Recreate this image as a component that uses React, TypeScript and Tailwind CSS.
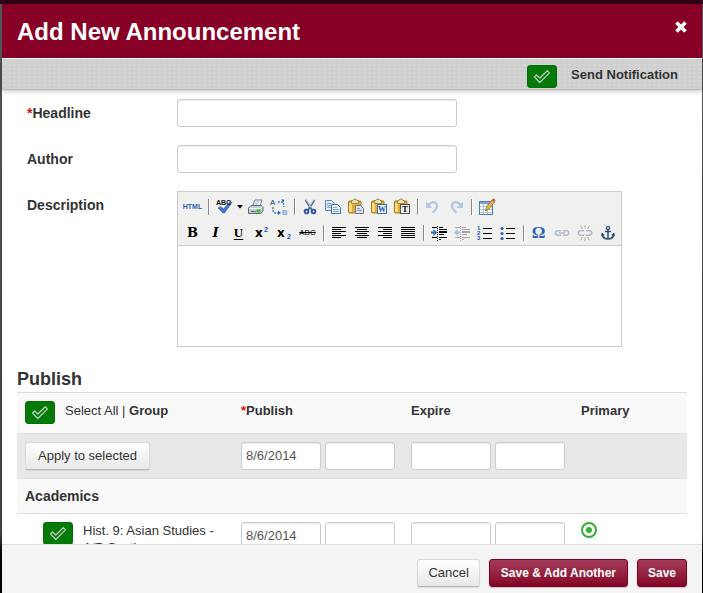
import type { ReactNode } from 'react';

interface ToolProps {
  label: string;
  children: ReactNode;
}

const Tool = ({ label, children }: ToolProps) => (
  <button
    type="button"
    aria-label={label}
    className="flex h-[26px] w-[23px] shrink-0 items-center justify-center pt-0.5"
  >
    {children}
  </button>
);

const Icon = ({ children }: { children: ReactNode }) => (
  <svg viewBox="0 0 18 18" className="h-[18px] w-[18px]" fill="none">
    {children}
  </svg>
);

const Separator = () => (
  <span className="flex w-2 shrink-0 items-center justify-end pt-0.5 pr-0.5">
    <span className="h-4 w-0.5 border-r border-white bg-[#8a8688]" />
  </span>
);

const Clipboard = ({ children }: { children: ReactNode }) => (
  <Icon>
    <rect x="1.5" y="3" width="12.500" height="12" rx="1" fill="#e3ad2f" stroke="#a07a22" />
    <path d="M3.500 5v9" stroke="#ffe48a" strokeWidth="2.500" />
    <path d="M4.500 2.500h1.500l1-1.500h2l1 1.500h1.500v3h-7z" fill="#eee3a8" stroke="#867a4c" strokeWidth=".8" />
    {children}
  </Icon>
);

const alignLines: { [k: string]: [number, number][] } = {
  left: [[2, 16], [2, 11], [2, 16], [2, 11], [2, 16], [2, 11]],
  center: [[2, 16], [4, 14], [2, 16], [4, 14], [2, 16], [4, 14]],
  right: [[2, 16], [7, 16], [2, 16], [7, 16], [2, 16], [7, 16]],
  justify: [[2, 16], [2, 16], [2, 16], [2, 16], [2, 16], [2, 16]],
};

const AlignIcon = ({ type }: { type: string }) => (
  <Icon>
    {alignLines[type].map(([from, to], i) => (
      <path key={i} d={`M${from} ${3.5 + i * 2}H${to}`} stroke="#000" />
    ))}
  </Icon>
);

const IndentIcon = ({ muted }: { muted?: boolean }) => {
  const color = muted ? '#a6a6a6' : '#000';
  return (
    <Icon>
      <path d="M2 3.500h5M9 3.500h4M9 5.500h8M9 10.500h5M2 13.500h5M9 13.500h8M9 15.500h2" stroke={color} />
      <path d="M9 8h8" stroke={color} strokeWidth="2" />
      <path d="M7.500 2v15" stroke={color} strokeDasharray="1 1" />
      <path
        d={muted ? 'M1 8.500l4-3.500v2.500h3v2H5V12z' : 'M7 8.500L3.500 5v2.500H1v2h2.500V12z'}
        fill={muted ? '#a9bfdf' : '#2f66c4'}
      />
    </Icon>
  );
};

const ListIcon = ({ numbered }: { numbered?: boolean }) => (
  <Icon>
    <path d="M7 4.500h9M7 9.500h9M7 14.500h9" stroke="#000" />
    {numbered ? (
      <g fill="#2458b8" fontFamily="Liberation Sans" fontWeight="bold" fontSize="6">
        <text x="1" y="6">1</text>
        <text x="1" y="11">2</text>
        <text x="1" y="16">3</text>
      </g>
    ) : (
      <g fill="#2f62b8">
        <circle cx="3" cy="4.500" r="1.600" />
        <circle cx="3" cy="9.500" r="1.600" />
        <circle cx="3" cy="14.500" r="1.600" />
      </g>
    )}
  </Icon>
);

const ArrowIcon = ({ redo }: { redo?: boolean }) => (
  <Icon>
    <g transform={redo ? 'translate(18 0) scale(-1 1)' : undefined}>
      <path d="M4 7.500C8 2.500 13 3.500 13 8c0 3-2 4.500-4.500 6.500" stroke="#b4c8e4" strokeWidth="2.300" />
      <path d="M2 3.500v6.500h6.500z" fill="#b3c8e6" />
    </g>
  </Icon>
);

const ChainIcon = ({ broken }: { broken?: boolean }) => (
  <Icon>
    <g stroke="#b3bac6" strokeWidth="1.600">
      <path d="M8 6.800H4.500a2.200 2.200 0 0 0 0 4.400H8M10 6.800h3.500a2.200 2.200 0 0 1 0 4.400H10" />
      {!broken && <path d="M6 9h6" />}
    </g>
    {broken && (
      <path
        d="M9 1v3.500M4.500 1.500l2 3.500M13.500 1.500l-2 3.500M9 17v-3.500M4.500 16.500l2-3.500M13.500 16.500l-2-3.500"
        stroke="#adadad"
      />
    )}
  </Icon>
);

const CheckToggle = ({ label }: { label: string }) => (
  <span className="grid h-[23px] w-[30px] shrink-0">
    <input
      type="checkbox"
      defaultChecked
      aria-label={label}
      className="col-start-1 row-start-1 h-full w-full appearance-none rounded bg-[#047a08] shadow-[inset_0_0_2px_#035005]"
    />
    <svg
      viewBox="0 0 30 23"
      className="pointer-events-none col-start-1 row-start-1 h-full w-full"
      fill="none"
    >
      <path
        d="M7.500 12l2-2 3.300 3 7.500-7.300 2.200 2.200-9.700 9.600z"
        stroke="#bfcfbf"
        strokeWidth="1.200"
        strokeLinejoin="round"
      />
    </svg>
  </span>
);

interface FieldProps {
  label: string;
  value?: string;
  className: string;
}

const Field = ({ label, value, className }: FieldProps) => (
  <input
    type="text"
    aria-label={label}
    defaultValue={value}
    className={`h-7 rounded-[3px] border border-[#ccc] bg-white px-1 pb-0.5 text-[13px] text-[#555] shadow-[inset_0_1px_1px_rgba(0,0,0,0.08)] ${className}`}
  />
);

const DateFields = ({ label, value }: { label: string; value?: string }) => (
  <div className="flex gap-1">
    <Field label={`${label} date`} value={value} className="w-20" />
    <Field label={`${label} time`} className="w-[70px]" />
  </div>
);

const EditorToolbar = () => (
  <div className="border-b border-[#ccc] bg-[#f0f0ee] pt-px pl-[3px]">
    <div className="flex">
      <Tool label="Edit HTML source">
        <span className="text-[7px] font-bold text-[#2b5fb4]">HTML</span>
      </Tool>
      <Separator />
      <Tool label="Check spelling">
        <Icon>
          <path d="M3 10l2.500-1.500 3 2.500L15 3.500l2 1L9.500 15H8z" fill="#3f74d1" stroke="#2c55a8" strokeWidth=".5" />
          <text x="1" y="7" fill="#111" fontFamily="Liberation Sans" fontWeight="bold" fontSize="7">ABC</text>
        </Icon>
      </Tool>
      <button type="button" aria-label="Spelling options" className="flex w-[9px] items-center justify-center pt-0.5">
        <svg viewBox="0 0 6 4" className="h-1 w-1.5">
          <path d="M0 0h6L3 3.500z" fill="#000" />
        </svg>
      </button>
      <Tool label="Print">
        <Icon>
          <path d="M5.500 8L8 2h7l-2 6z" fill="#fff" stroke="#6d7d92" />
          <path d="M8.500 4h4M7.500 6h4" stroke="#9fb3cc" />
          <path d="M1.500 10L4 7.500h10.500L16 9v4l-2 2.500H1.500z" fill="#c4ccd6" stroke="#5d6b7c" />
          <path d="M2 10.500h11.500L15.500 8.500" stroke="#f5f7fa" />
          <path d="M4 13.500h5" stroke="#5d6b7c" />
          <rect x="9.500" y="11.500" width="4" height="3" fill="#2fc22f" />
        </Icon>
      </Tool>
      <Tool label="Find and replace">
        <Icon>
          <text x="0" y="7" fill="#223d78" fontFamily="Liberation Sans" fontSize="8">A</text>
          <text x="12" y="17" fill="#4d82d8" fontFamily="Liberation Sans" fontSize="8">B</text>
          <path d="M3 9v4l2 2h5" stroke="#3f74d1" strokeWidth="1.300" strokeDasharray="2 1" />
          <path d="M8 4h5l1 5" stroke="#3f74d1" strokeWidth="1.300" strokeDasharray="2 1" />
          <path d="M8 12.500l3 2.500-3 2zM11 1.500h3v3z" fill="#2c5fc0" />
        </Icon>
      </Tool>
      <Separator />
      <Tool label="Cut">
        <Icon>
          <path d="M4.500 2L11 12M13.500 2L7 12" stroke="#536d94" strokeWidth="2" />
          <path d="M5 2l5.500 8M13 2L8 9" stroke="#c5d3e8" strokeWidth=".7" />
          <circle cx="5.500" cy="13.500" r="1.900" stroke="#254f9f" strokeWidth="1.800" />
          <circle cx="12.500" cy="13.500" r="1.900" stroke="#254f9f" strokeWidth="1.800" />
        </Icon>
      </Tool>
      <Tool label="Copy">
        <Icon>
          <path d="M1.500 2.500h6l3 3v7h-9z" fill="#e3eefc" stroke="#5683c8" />
          <path d="M3 5.500h4M3 7.500h5M3 9.500h5" stroke="#7fa6df" />
          <path d="M7.500 6.500h6l3 3v6h-9z" fill="#edf4fe" stroke="#4271bb" />
          <path d="M9 9.500h4M9 11.500h6M9 13.500h6" stroke="#7fa6df" />
        </Icon>
      </Tool>
      <Tool label="Paste">
        <Clipboard>
          <path d="M8.500 7.500h5l3 3v5h-8z" fill="#dae2ee" stroke="#687a98" />
          <path d="M10 10.500h3M10 12.500h5" stroke="#8598b8" />
        </Clipboard>
      </Tool>
      <Tool label="Paste from Word">
        <Clipboard>
          <rect x="7.500" y="6.500" width="9" height="9" fill="#f2f6ff" stroke="#3d69b5" />
          <text x="8" y="14" fill="#234f9d" fontFamily="Liberation Serif" fontWeight="bold" fontSize="8">W</text>
        </Clipboard>
      </Tool>
      <Tool label="Paste plain text">
        <Clipboard>
          <rect x="7.500" y="6.500" width="9" height="9" fill="#eee" stroke="#555" />
          <text x="9" y="14" fill="#111" fontFamily="Liberation Serif" fontWeight="bold" fontSize="9">T</text>
        </Clipboard>
      </Tool>
      <Separator />
      <Tool label="Undo"><ArrowIcon /></Tool>
      <Tool label="Redo"><ArrowIcon redo /></Tool>
      <Separator />
      <Tool label="Insert table">
        <Icon>
          <rect x="1.500" y="3.500" width="13" height="13" fill="#fff" stroke="#4e78bb" />
          <path d="M2 5h12" stroke="#7fa5dd" strokeWidth="2" />
          <path d="M2 8.500h12M2 11.500h12M2 14.500h12M5.500 6v10M9.500 6v10" stroke="#a9c0e2" />
          <path d="M14 2l2.500 2-6 7.500-3 1.500.8-3.500z" fill="#f1b63c" stroke="#87622a" strokeWidth=".8" />
          <path d="M14 1.500l1.500-1L17.500 2l-1 1.800z" fill="#c9443c" />
        </Icon>
      </Tool>
    </div>
    <div className="flex text-black">
      <Tool label="Bold">
        <span className="font-['DejaVu_Serif',serif] text-[13px] font-bold">B</span>
      </Tool>
      <Tool label="Italic">
        <span className="font-['DejaVu_Serif',serif] text-[13px] font-bold italic">I</span>
      </Tool>
      <Tool label="Underline">
        <span className="font-['Liberation_Serif',serif] text-[13px] font-bold underline underline-offset-2">U</span>
      </Tool>
      <Tool label="Superscript">
        <Icon>
          <text x="2" y="13" fill="#000" fontFamily="DejaVu Sans" fontWeight="bold" fontSize="12">x</text>
          <text x="11" y="8" fill="#2458b8" fontFamily="Liberation Sans" fontWeight="bold" fontSize="7">2</text>
        </Icon>
      </Tool>
      <Tool label="Subscript">
        <Icon>
          <text x="1" y="13" fill="#000" fontFamily="DejaVu Sans" fontWeight="bold" fontSize="12">x</text>
          <text x="11" y="15" fill="#2458b8" fontFamily="Liberation Sans" fontWeight="bold" fontSize="7">2</text>
        </Icon>
      </Tool>
      <Tool label="Strikethrough">
        <span className="text-[8px] line-through">ABC</span>
      </Tool>
      <Separator />
      <Tool label="Align left"><AlignIcon type="left" /></Tool>
      <Tool label="Align center"><AlignIcon type="center" /></Tool>
      <Tool label="Align right"><AlignIcon type="right" /></Tool>
      <Tool label="Justify"><AlignIcon type="justify" /></Tool>
      <Separator />
      <Tool label="Indent"><IndentIcon /></Tool>
      <Tool label="Outdent"><IndentIcon muted /></Tool>
      <Tool label="Numbered list"><ListIcon numbered /></Tool>
      <Tool label="Bullet list"><ListIcon /></Tool>
      <Separator />
      <Tool label="Special character">
        <span className="font-['Liberation_Serif',serif] text-[17px]/5 font-bold text-[#2f62b8]">Ω</span>
      </Tool>
      <Tool label="Insert link"><ChainIcon /></Tool>
      <Tool label="Remove link"><ChainIcon broken /></Tool>
      <Tool label="Anchor">
        <Icon>
          <circle cx="9" cy="4" r="1.600" stroke="#2f4d75" strokeWidth="1.300" />
          <path d="M9 6v9M6 7.500h6" stroke="#2f4d75" strokeWidth="1.500" />
          <path d="M3.500 10c0 4 3 5 5.500 5s5.500-1 5.500-5" stroke="#2f4d75" strokeWidth="1.700" />
          <path d="M1.800 12l1-3.500L6 11zM16.200 12l-1-3.500L12 11z" fill="#2f4d75" />
        </Icon>
      </Tool>
    </div>
  </div>
);

const Required = () => <span className="text-[#d4140c]">*</span>;

const primaryButton =
  'h-7 rounded-[3px] border border-[#7c0326] bg-linear-to-b from-[#a33a59] to-[#850026] pb-px text-[12px] font-bold text-white shadow-[0_1px_1px_rgba(0,0,0,0.2)]';

const plainButton =
  'h-7 rounded-[3px] border border-[#d8d8d8] border-b-[#b8b8b8] bg-linear-to-b from-white to-[#e8e8e8] pb-px text-[13px] text-[#333] shadow-[0_1px_1px_rgba(0,0,0,0.1)]';

export default function App() {
  return (
    <div className="flex h-screen flex-col bg-linear-to-b from-[#55565a] from-0% via-[#3e3e42] via-90% to-black to-95% pr-px pl-0.5 font-['Liberation_Sans',Arial,sans-serif] text-[13px] text-[#333]">
      <div className="-mr-px -ml-0.5 h-1 shrink-0 bg-[#2b0010]" />
      <header className="flex h-[54px] shrink-0 items-center justify-between bg-[#870026] px-[15px] text-white">
        <h1 className="pt-0.5 text-2xl font-bold">Add New Announcement</h1>
        <button type="button" aria-label="Close" className="mb-2">
          <svg viewBox="0 0 12 12" className="h-3 w-3" stroke="#fff" strokeWidth="3.600">
            <path d="M1.500 1.500l9 9M10.500 1.500l-9 9" />
          </svg>
        </button>
      </header>
      <div className="z-10 flex h-8 shrink-0 items-center justify-end gap-3.5 border-t border-b border-t-white border-b-[#bcbcbc] bg-[radial-gradient(#d5d5d5_1px,#cfcfcf_2px)] bg-[size:5px_4px] pt-1 pr-6 shadow-[0_1px_5px_rgba(0,0,0,0.25)]">
        <CheckToggle label="Send Notification" />
        <span className="pb-0.5 font-bold">Send Notification</span>
      </div>

      <main className="min-h-0 flex-1 overflow-hidden bg-white px-[15px] pt-[9px]">
        <div className="grid grid-cols-[150px_1fr] gap-y-[18px] pl-2.5 text-sm">
          <label htmlFor="headline" className="pt-1 font-bold"><Required />Headline</label>
          <input id="headline" className="h-7 w-[280px] rounded-[3px] border border-[#ccc] px-1 shadow-[inset_0_1px_1px_rgba(0,0,0,0.08)]" />
          <label htmlFor="author" className="pt-1 font-bold">Author</label>
          <input id="author" className="h-7 w-[280px] rounded-[3px] border border-[#ccc] px-1 shadow-[inset_0_1px_1px_rgba(0,0,0,0.08)]" />
          <label htmlFor="description" className="pt-1 font-bold">Description</label>
          <div className="w-[445px] border border-[#ccc]">
            <EditorToolbar />
            <textarea id="description" className="block h-[100px] w-full resize-none" />
          </div>
        </div>

        <h2 className="mt-5 mb-px text-lg/6 font-bold">Publish</h2>
        <table className="w-full table-fixed border-collapse text-left">
          <colgroup>
            <col className="w-[216px]" />
            <col className="w-[170px]" />
            <col className="w-[170px]" />
            <col />
          </colgroup>
          <thead>
            <tr className="h-[41px] border-t border-b border-[#ddd] bg-[#f9f9f9] align-top">
              <th className="pt-2 pl-2 font-normal">
                <div className="flex gap-2.5">
                  <CheckToggle label="Select all" />
                  <span>Select All | <b>Group</b></span>
                </div>
              </th>
              <th className="pt-2 pl-2"><Required />Publish</th>
              <th className="pt-2 pl-2">Expire</th>
              <th className="pt-2 pl-2">Primary</th>
            </tr>
          </thead>
          <tbody>
            <tr className="h-[45px] border-b border-[#ddd] bg-[#e8e8e8]">
              <td className="pl-2">
                <button type="button" className={`px-3 ${plainButton}`}>Apply to selected</button>
              </td>
              <td className="pl-2"><DateFields label="Publish all" value="8/6/2014" /></td>
              <td className="pl-2"><DateFields label="Expire all" /></td>
              <td />
            </tr>
            <tr className="h-[35px] border-b border-[#ddd] bg-[#f9f9f9]">
              <th colSpan={4} className="pl-2 text-sm font-bold">Academics</th>
            </tr>
            <tr className="align-top">
              <td className="pt-2 pl-[26px]">
                <div className="flex gap-2.5">
                  <CheckToggle label="Hist. 9: Asian Studies" />
                  <span className="leading-[17px]">Hist. 9: Asian Studies - A/B Section</span>
                </div>
              </td>
              <td className="pt-2 pl-2"><DateFields label="Publish" value="8/6/2014" /></td>
              <td className="pt-2 pl-2"><DateFields label="Expire" /></td>
              <td className="pt-2 pl-2">
                <input
                  type="radio"
                  name="primary"
                  defaultChecked
                  aria-label="Primary"
                  className="grid h-4 w-4 appearance-none place-items-center rounded-full border-2 border-[#32b032] before:h-1.5 before:w-1.5 before:rounded-full before:bg-[#32b032]"
                />
              </td>
            </tr>
          </tbody>
        </table>
      </main>

      <footer className="flex h-[49px] shrink-0 justify-end gap-[9px] border-t border-[#ddd] bg-[#f4f4f4] pt-3.5 pr-[15px]">
        <button type="button" className={`px-2.5 ${plainButton}`}>Cancel</button>
        <button type="button" className={`px-[11px] ${primaryButton}`}>Save &amp; Add Another</button>
        <button type="button" className={`px-2.5 ${primaryButton}`}>Save</button>
      </footer>
    </div>
  );
}
